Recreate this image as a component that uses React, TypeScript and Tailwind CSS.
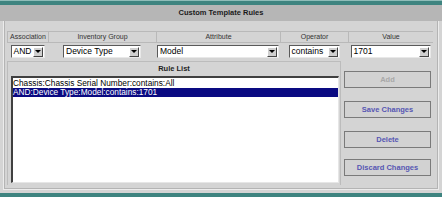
import { ReactNode } from "react";

const font = { fontFamily: '"Liberation Sans", Arial, sans-serif' };

const Combo = ({ value, w }: { value: string; w: string }) => (
  <div
    className={`${w} h-[13px] flex items-center bg-white border border-t-[#5a5a5a] border-l-[#5a5a5a] border-b-[#e8e8e8] border-r-[#e8e8e8]`}
  >
    <span className="flex-1 pl-[2px] text-[8.5px] leading-none text-black whitespace-nowrap overflow-hidden">
      {value}
    </span>
    <span className="w-[10px] h-[10px] mr-[1px] flex items-center justify-center bg-[#cfcfcf] border border-t-white border-l-white border-b-[#444] border-r-[#444]">
      <span className="w-0 h-0 border-l-[3px] border-r-[3px] border-t-[3px] border-l-transparent border-r-transparent border-t-black" />
    </span>
  </div>
);

const Btn = ({ children, disabled }: { children: ReactNode; disabled?: boolean }) => (
  <div
    className={`w-[87px] h-[17px] flex items-center justify-center border border-[#7a7a7a] bg-[#d2d2d2] text-[7.5px] font-bold ${
      disabled ? "text-[#a8a8a8]" : "text-[#5656b2]"
    }`}
  >
    {children}
  </div>
);

const cols = [
  { label: "Association", w: "w-[41px]", combo: <Combo value="AND" w="w-[34px]" /> },
  { label: "Inventory Group", w: "w-[108px]", combo: <Combo value="Device Type" w="w-[78px]" /> },
  { label: "Attribute", w: "w-[124px]", combo: <Combo value="Model" w="w-[122px]" /> },
  { label: "Operator", w: "w-[68px]", combo: <Combo value="contains" w="w-[51px]" /> },
  { label: "Value", w: "w-[85px]", combo: <Combo value="1701" w="w-[80px]" /> },
];

const rules = ["Chassis:Chassis Serial Number:contains:All", "AND:Device Type:Model:contains:1701"];

export default function App() {
  return (
    <div style={font} className="w-[442px] h-[200px] bg-white flex flex-col overflow-hidden">
      {/* top band */}
      <div className="h-[5px] shrink-0 bg-[#3e8480] border-t border-[#8fbdb9]" />

      <div className="h-[188px] shrink-0 bg-[#d4d4d4] flex flex-col">
        {/* title */}
        <div className="h-[16px] shrink-0 bg-[#b6b6b6] flex items-center justify-center text-[7.5px] font-bold text-[#1a1a1a]">
          Custom Template Rules
        </div>

        {/* bevelled frame */}
        <div className="flex-1 mx-[3px] mb-[3px] border-l border-r border-b border-[#ececec]">
          <div className="h-full border-l border-r border-b border-[#b4b4b4] pl-[2px] pt-[10px]">
            {/* criteria table */}
            <div className="flex">
              {cols.map((c) => (
                <div key={c.label} className={`${c.w} flex flex-col`}>
                  <div className="h-[12px] flex items-center justify-center border border-[#b9b9b9] border-r-0 text-[7px] text-[#333]">
                    {c.label}
                  </div>
                  <div className="h-[17px] flex items-center justify-center">{c.combo}</div>
                </div>
              ))}
            </div>

            {/* rule list + buttons */}
            <div className="flex mt-[1px] h-[124px]">
              <div className="w-[334px] flex flex-col border border-[#bcbcbc] border-b-0">
                <div className="h-[14px] shrink-0 flex items-center justify-center text-[7.5px] font-bold text-[#222]">
                  Rule List
                </div>
                <div className="ml-[3px] mr-[1px] h-[107px] shrink-0 bg-white border-t-2 border-l-2 border-t-[#404040] border-l-[#404040] border-b border-r border-b-[#e6e6e6] border-r-[#e6e6e6] pt-[1px]">
                  {rules.map((r, i) => (
                    <div
                      key={r}
                      className={`h-[9px] flex items-center text-[8.3px] leading-none whitespace-nowrap ${
                        i === 1 ? "bg-[#0a0a82] text-white" : "text-black"
                      }`}
                    >
                      {r}
                    </div>
                  ))}
                </div>
              </div>

              <div className="flex flex-col pl-[3px] pt-[10px]">
                <Btn disabled>Add</Btn>
                <div className="mt-[13px]">
                  <Btn>Save Changes</Btn>
                </div>
                <div className="mt-[13px]">
                  <Btn>Delete</Btn>
                </div>
                <div className="mt-[11px]">
                  <Btn>Discard Changes</Btn>
                </div>
              </div>
            </div>
          </div>
        </div>
      </div>

      {/* bottom band */}
      <div className="h-[4px] shrink-0 bg-[#3e8480]" />
    </div>
  );
}
